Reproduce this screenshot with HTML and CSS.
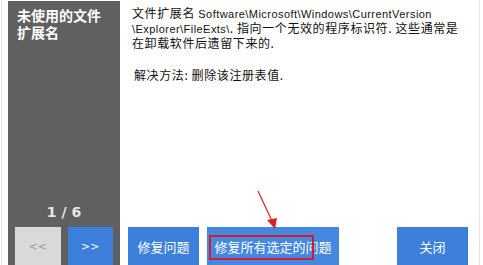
FILE: index.html
```html
<!DOCTYPE html>
<html lang="zh-CN">
<head>
  <meta charset="UTF-8">
  <title>未使用的文件扩展名</title>
  <link rel="stylesheet" href="styles.css">
</head>
<body>
  <div class="dialog">
    <!-- 左侧栏 -->
    <div class="side">
      <div class="side-title">未使用的文件<br>扩展名</div>
      <div class="pager">1 / 6</div>
      <div class="nav">
        <button class="btn btn-off">&lt;&lt;</button>
        <button class="btn">&gt;&gt;</button>
      </div>
    </div>

    <!-- 说明 + 操作 -->
    <div class="main">
      <div class="desc">
        <p>文件扩展名 <span class="path">Software\Microsoft\Windows\CurrentVersion</span><br><span class="path">\Explorer\FileExts\</span>. 指向一个无效的程序标识符. 这些通常是<br>在卸载软件后遗留下来的.</p>
        <p class="fix">解决方法: 删除该注册表值.</p>
      </div>
      <div class="actions">
        <button class="btn">修复问题</button>
        <button class="btn btn-all">修复所有选定的问题<span class="mark"></span></button>
        <button class="btn btn-close">关闭</button>
      </div>
    </div>

    <svg class="arrow" width="40" height="50" viewBox="0 0 40 50">
      <line x1="6" y1="4" x2="20" y2="34" stroke="#e02020" stroke-width="1.2"/>
      <polygon points="15,33 25,31 23,42" fill="#e02020"/>
    </svg>
  </div>
</body>
</html>
```

FILE: styles.css
```css
body {
  margin: 0;
  overflow: hidden;
  background: #fff;
  font-family: "Liberation Sans", "Noto Sans CJK SC", sans-serif;
}
.dialog {
  position: relative;
  display: flex;
  width: 479px;
  height: 266px;
  margin-left: 1px;
  padding-top: 1px;
  padding-left: 6px;
  border-left: 1px solid #e4e4e4;
  border-right: 1px solid #e4e4e4;
  box-sizing: border-box;
}
.side {
  width: 112px;
  background: #606060;
  display: flex;
  flex-direction: column;
}
.side-title {
  color: #fff;
  font-weight: bold;
  font-size: 14px;
  line-height: 17px;
  padding: 7px 9px 0;
}
.pager {
  margin-top: auto;
  text-align: center;
  color: #e6e6e6;
  font-family: "DejaVu Sans", sans-serif;
  font-weight: bold;
  font-size: 14px;
  line-height: 16px;
  margin-bottom: 7px;
}
.nav {
  display: flex;
  gap: 7px;
  padding: 0 7px;
}
.nav .btn {
  flex: 1;
}
.btn {
  height: 39px;
  border: none;
  padding: 0;
  background: #3d80dc;
  color: #fff;
  font-family: "Noto Sans CJK SC", sans-serif;
  font-size: 13px;
}
.btn-off {
  background: #d9d9d9;
  color: #9a9a9a;
}
.nav .btn {
  font-family: "DejaVu Sans", sans-serif;
  font-size: 11px;
}
.main {
  flex: 1;
  display: flex;
  flex-direction: column;
  padding: 0 11px 0 8px;
}
.desc {
  flex: 1;
  padding: 5px 0 0 4px;
  font-family: "Noto Sans CJK SC", sans-serif;
  font-size: 12px;
  line-height: 14px;
  letter-spacing: 0.6px;
  color: #111;
}
.desc p {
  margin: 0 0 18px;
}
.desc .fix {
  padding-left: 2px;
}
.path {
  font-family: "Liberation Sans", sans-serif;
  font-size: 11px;
  letter-spacing: 0.45px;
}
.actions {
  display: flex;
  gap: 8px;
}
.actions .btn {
  width: 71px;
}
.actions .btn-all {
  position: relative;
  width: 132px;
  background: #4588e0;
}
.actions .btn-close {
  margin-left: auto;
}
.mark {
  position: absolute;
  left: 2px;
  top: 8px;
  width: 101px;
  height: 21px;
  border: 2px solid #d41a2c;
}
.arrow {
  position: absolute;
  left: 250px;
  top: 187px;
}
```
